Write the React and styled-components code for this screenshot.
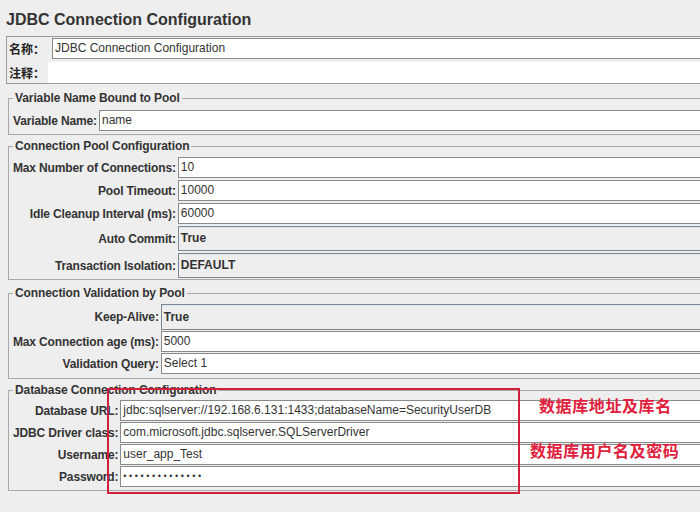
import styled, { createGlobalStyle } from "styled-components";

const GlobalStyle = createGlobalStyle`
  html, body {
    margin: 0;
    padding: 0;
    overflow: hidden;
    background: #eeeeee;
  }
  body {
    font-family: "Liberation Sans", Arial, sans-serif;
    color: #333;
  }
`;

const Page = styled.div`
  position: relative;
  width: 780px;
  height: 512px;
  box-sizing: border-box;
  padding-left: 6px;
  background: #eeeeee;
`;

const Title = styled.h1`
  margin: 0;
  height: 36px;
  line-height: 39px;
  font-size: 16px;
  font-weight: bold;
  color: #333;
`;

const NamePanel = styled.div`
  border: 1px solid #9a9a9a;
  border-right: none;
  padding: 1px 0 0 1px;
  display: flex;
  flex-direction: column;
  gap: 3px;
`;

const NameRow = styled.div`
  display: flex;
  align-items: center;
  height: 21px;
`;

const CnLabel = styled.span`
  width: ${p => p.$width}px;
  padding-left: 1px;
  font-family: "Noto Sans CJK SC", sans-serif;
  font-size: 12px;
  font-weight: bold;
  color: #222;
  white-space: nowrap;
`;

const Group = styled.fieldset`
  margin: ${p => p.$top}px 0 0 2px;
  padding: ${p => p.$padTop}px 0 ${p => p.$padBottom}px 4px;
  border: 1px solid #a8a8a8;
  border-right: none;
  min-width: 0;
`;

const Legend = styled.legend`
  padding: 0 2px;
  font-size: 12px;
  line-height: 14px;
  font-weight: bold;
  letter-spacing: -0.1px;
  color: #333;
`;

const Form = styled.div`
  display: grid;
  grid-template-columns: max-content 1fr;
  column-gap: 2px;
  row-gap: ${p => p.$gap}px;
  align-items: center;
`;

const Label = styled.span`
  text-align: right;
  font-size: 12px;
  font-weight: bold;
  letter-spacing: -0.15px;
  color: #333;
  white-space: nowrap;
`;

const TextField = styled.div`
  flex: 1;
  height: 21px;
  box-sizing: border-box;
  border: 1px solid ${p => (p.$plain ? "transparent" : "#8a8a8a")};
  border-right: none;
  background: #fff;
  padding: 0 2px;
  font-size: ${p => (p.$secret ? 9 : 12)}px;
  letter-spacing: ${p => (p.$secret ? 2.6 : 0)}px;
  line-height: 19px;
  color: #333;
  white-space: nowrap;
  overflow: hidden;
`;

const Combo = styled.div`
  height: ${p => p.$h}px;
  box-sizing: border-box;
  border: 1px solid #7d8693;
  border-right: none;
  box-shadow: inset 0 1px 0 #dfe7f1;
  background: #eeeeee;
  padding-left: 2px;
  font-size: 12px;
  font-weight: bold;
  line-height: ${p => p.$h - 2}px;
  color: #333;
`;

const Highlight = styled.div`
  position: absolute;
  left: 107px;
  top: 388px;
  width: 413px;
  height: 106px;
  box-sizing: border-box;
  border: 2px solid #d21f3c;
  pointer-events: none;
`;

const Note = styled.div`
  position: absolute;
  left: ${p => p.$x}px;
  top: ${p => p.$y}px;
  font-family: "Noto Sans CJK SC", sans-serif;
  font-size: 16px;
  font-weight: bold;
  letter-spacing: 0.6px;
  line-height: 20px;
  color: #e0203c;
  white-space: nowrap;
`;

function Row({ label, value, combo, secret, h = 25 }) {
  return (
    <>
      <Label>{label}</Label>
      {combo ? (
        <Combo $h={h}>{value}</Combo>
      ) : (
        <TextField $secret={secret}>{value}</TextField>
      )}
    </>
  );
}

export default function App() {
  return (
    <Page>
      <GlobalStyle />
      <Title>JDBC Connection Configuration</Title>

      <NamePanel>
        <NameRow>
          <CnLabel $width={43}>名称：</CnLabel>
          <TextField>JDBC Connection Configuration</TextField>
        </NameRow>
        <NameRow>
          <CnLabel $width={39}>注释：</CnLabel>
          <TextField $plain />
        </NameRow>
      </NamePanel>

      <Group $top={7} $padTop={5} $padBottom={3}>
        <Legend>Variable Name Bound to Pool</Legend>
        <Form $gap={1}>
          <Row label="Variable Name:" value="name" />
        </Form>
      </Group>

      <Group $top={4} $padTop={4} $padBottom={1}>
        <Legend>Connection Pool Configuration</Legend>
        <Form $gap={2}>
          <Row label="Max Number of Connections:" value="10" />
          <Row label="Pool Timeout:" value="10000" />
          <Row label="Idle Cleanup Interval (ms):" value="60000" />
          <Row label="Auto Commit:" value="True" combo />
          <Row label="Transaction Isolation:" value="DEFAULT" combo />
        </Form>
      </Group>

      <Group $top={6} $padTop={4} $padBottom={4}>
        <Legend>Connection Validation by Pool</Legend>
        <Form $gap={1}>
          <Row label="Keep-Alive:" value="True" combo h={26} />
          <Row label="Max Connection age (ms):" value="5000" />
          <Row label="Validation Query:" value="Select 1" />
        </Form>
      </Group>

      <Group $top={4} $padTop={3} $padBottom={3}>
        <Legend>Database Connection Configuration</Legend>
        <Form $gap={1}>
          <Row label="Database URL:" value="jdbc:sqlserver://192.168.6.131:1433;databaseName=SecurityUserDB" />
          <Row label="JDBC Driver class:" value="com.microsoft.jdbc.sqlserver.SQLServerDriver" />
          <Row label="Username:" value="user_app_Test" />
          <Row label="Password:" value="••••••••••••••" secret />
        </Form>
      </Group>

      <Highlight />
      <Note $x={539} $y={395}>数据库地址及库名</Note>
      <Note $x={530} $y={440}>数据库用户名及密码</Note>
    </Page>
  );
}
